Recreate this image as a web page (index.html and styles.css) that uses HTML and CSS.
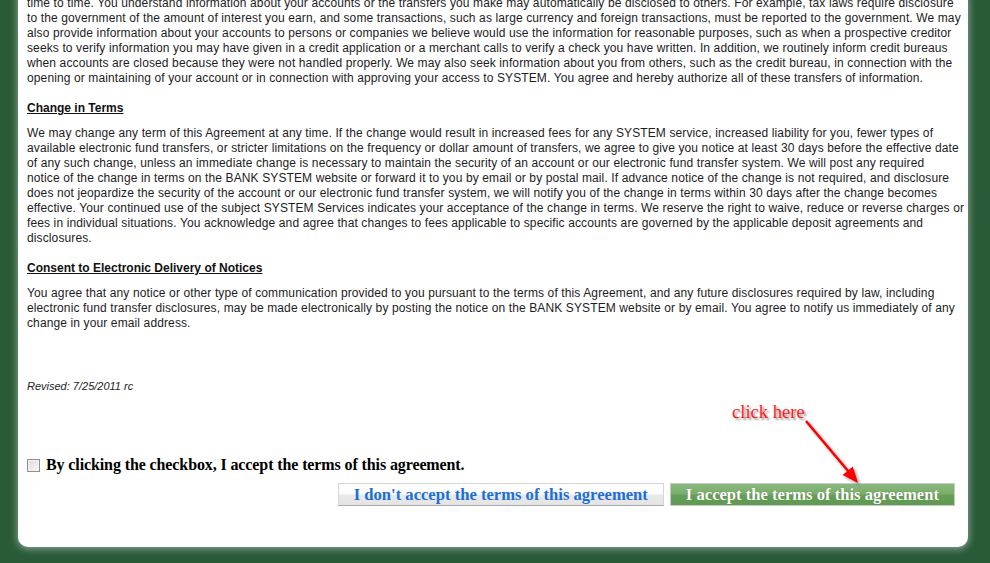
FILE: index.html
```html
<!DOCTYPE html>
<html>
<head>
<meta charset="utf-8">
<link rel="stylesheet" href="styles.css">
</head>
<body>
<div class="panel">
  <p class="para">time to time. You understand information about your accounts or the transfers you make may automatically be disclosed to others. For example, tax laws require disclosure<br>to the government of the amount of interest you earn, and some transactions, such as large currency and foreign transactions, must be reported to the government. We may<br>also provide information about your accounts to persons or companies we believe would use the information for reasonable purposes, such as when a prospective creditor<br>seeks to verify information you may have given in a credit application or a merchant calls to verify a check you have written. In addition, we routinely inform credit bureaus<br>when accounts are closed because they were not handled properly. We may also seek information about you from others, such as the credit bureau, in connection with the<br>opening or maintaining of your account or in connection with approving your access to SYSTEM. You agree and hereby authorize all of these transfers of information.</p>

  <h3 class="heading">Change in Terms</h3>
  <p class="para">We may change any term of this Agreement at any time. If the change would result in increased fees for any SYSTEM service, increased liability for you, fewer types of<br>available electronic fund transfers, or stricter limitations on the frequency or dollar amount of transfers, we agree to give you notice at least 30 days before the effective date<br>of any such change, unless an immediate change is necessary to maintain the security of an account or our electronic fund transfer system. We will post any required<br>notice of the change in terms on the BANK SYSTEM website or forward it to you by email or by postal mail. If advance notice of the change is not required, and disclosure<br>does not jeopardize the security of the account or our electronic fund transfer system, we will notify you of the change in terms within 30 days after the change becomes<br>effective. Your continued use of the subject SYSTEM Services indicates your acceptance of the change in terms. We reserve the right to waive, reduce or reverse charges or<br>fees in individual situations. You acknowledge and agree that changes to fees applicable to specific accounts are governed by the applicable deposit agreements and<br>disclosures.</p>

  <h3 class="heading">Consent to Electronic Delivery of Notices</h3>
  <p class="para">You agree that any notice or other type of communication provided to you pursuant to the terms of this Agreement, and any future disclosures required by law, including<br>electronic fund transfer disclosures, may be made electronically by posting the notice on the BANK SYSTEM website or by email. You agree to notify us immediately of any<br>change in your email address.</p>

  <p class="revised">Revised: 7/25/2011 rc</p>

  <label class="accept-row">
    <input type="checkbox" class="check">
    <span>By clicking the checkbox, I accept the terms of this agreement.</span>
  </label>

  <div class="actions">
    <button class="btn btn-decline">I don't accept the terms of this agreement</button>
    <button class="btn btn-accept">I accept the terms of this agreement</button>
  </div>

  <span class="hint">click here</span>
  <svg class="hint-arrow" width="70" height="75" viewBox="0 0 70 75">
    <line x1="6" y1="3" x2="48.5" y2="53.5" stroke="#ff0000" stroke-width="2.6"/>
    <polygon points="58,65 42.6,57 52.8,48.4" fill="#ff0000"/>
  </svg>
</div>
</body>
</html>
```

FILE: styles.css
```css
html, body {
  margin: 0;
  padding: 0;
}

body {
  background: #2a5b39;
  height: 563px;
  overflow: hidden;
}

.panel {
  position: relative;
  box-sizing: border-box;
  width: 950px;
  margin: -4px 0 0 18px;
  padding: 0 13px 41px 9px;
  background: #ffffff;
  border-radius: 0 0 10px 10px;
  box-shadow: 0 1px 7px 1px rgba(215, 220, 215, 0.55);
  color: #1c1c24;
  font-family: "Liberation Sans", Arial, sans-serif;
}

.para {
  margin: 0;
  font-size: 12px;
  line-height: 15px;
  letter-spacing: 0.12px;
  white-space: nowrap;
}

.heading {
  margin: 14px 0 10px;
  font-size: 12px;
  line-height: 15px;
  font-weight: bold;
  text-decoration: underline;
  color: #111;
}

.para + .heading {
  margin-top: 15px;
}

.revised {
  margin: 48px 0 0;
  font-size: 11px;
  line-height: 15px;
  font-style: italic;
}

.accept-row {
  display: flex;
  align-items: center;
  gap: 6px;
  margin-top: 62px;
  height: 18px;
  font-family: "Liberation Serif", "Times New Roman", serif;
  font-weight: bold;
  font-size: 16px;
  letter-spacing: -0.11px;
  color: #000;
}

.check {
  appearance: none;
  -webkit-appearance: none;
  box-sizing: border-box;
  width: 13px;
  height: 13px;
  margin: 0;
  border: 1px solid #8e8f8f;
  background: linear-gradient(135deg, #dcdcdc, #f7f7f7);
  box-shadow: inset 0 0 0 1px #f2f2f2;
}

.actions {
  display: flex;
  justify-content: flex-end;
  gap: 6px;
  margin-top: 9px;
}

.btn {
  box-sizing: border-box;
  height: 23px;
  padding: 0 15px;
  font-family: "Liberation Serif", "Times New Roman", serif;
  font-weight: bold;
  font-size: 16.6px;
  line-height: 21px;
  cursor: pointer;
}

.btn-decline {
  border: 1px solid #d6d6d6;
  border-bottom-color: #a9a9a9;
  background: linear-gradient(#ffffff 0%, #fbfbfb 45%, #e9e9e9 55%, #e4e4e4 100%);
  color: #1b6fd6;
}

.btn-accept {
  border: 1px solid #c9c9c9;
  background: linear-gradient(#8ab97e 0%, #7aae6c 45%, #659f57 55%, #5f9a51 100%);
  color: #ffffff;
  text-shadow: 0 0 1px rgba(60, 90, 40, 0.6);
}

.hint {
  position: absolute;
  left: 714px;
  top: 405px;
  font-family: "Liberation Serif", "Times New Roman", serif;
  font-size: 18.6px;
  color: #ff1a1a;
  text-shadow: 2px 2px 2px #9a9a9a;
}

.hint-arrow {
  position: absolute;
  left: 782px;
  top: 422px;
  filter: drop-shadow(2px 2px 1.5px rgba(120, 120, 120, 0.7));
}
```
